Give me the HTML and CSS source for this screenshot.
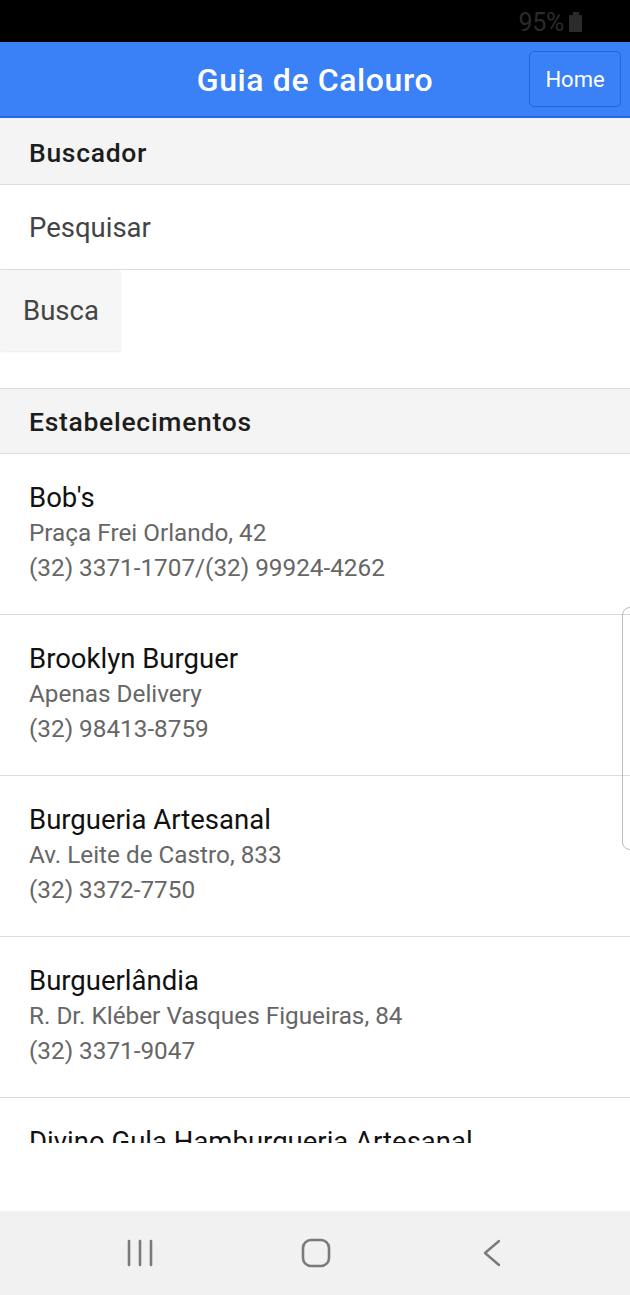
FILE: index.html
```html
<!DOCTYPE html>
<html lang="pt">
<head>
<meta charset="utf-8">
<title>Guia de Calouro</title>
<link rel="stylesheet" href="styles.css">
</head>
<body>
<div class="screen">
  <div class="statusbar">
    <span class="battery-text">95%</span>
    <span class="battery"><span class="battery-nub"></span><span class="battery-body"></span></span>
  </div>
  <header class="toolbar">
    <div class="toolbar-title">Guia de Calouro</div>
    <button class="home-btn">Home</button>
  </header>
  <main class="content">
    <div class="scroll">
      <div class="list-header">Buscador</div>
      <div class="input-row">Pesquisar</div>
      <div class="search-area">
        <button class="search-btn">Busca</button>
      </div>
      <div class="list-header second">Estabelecimentos</div>
      <div class="item">
        <div class="item-name">Bob's</div>
        <div class="item-line">Praça Frei Orlando, 42</div>
        <div class="item-line">(32) 3371-1707/(32) 99924-4262</div>
      </div>
      <div class="item">
        <div class="item-name">Brooklyn Burguer</div>
        <div class="item-line">Apenas Delivery</div>
        <div class="item-line">(32) 98413-8759</div>
      </div>
      <div class="item">
        <div class="item-name">Burgueria Artesanal</div>
        <div class="item-line">Av. Leite de Castro, 833</div>
        <div class="item-line">(32) 3372-7750</div>
      </div>
      <div class="item">
        <div class="item-name">Burguerlândia</div>
        <div class="item-line">R. Dr. Kléber Vasques Figueiras, 84</div>
        <div class="item-line">(32) 3371-9047</div>
      </div>
      <div class="item">
        <div class="item-name">Divino Gula Hamburgueria Artesanal</div>
      </div>
    </div>
    <div class="scroll-indicator"></div>
  </main>
  <nav class="navbar">
    <svg class="nav-icon" width="30" height="30" viewBox="0 0 30 30">
      <g stroke="#7a7a7a" stroke-width="2.6" stroke-linecap="round">
        <line x1="4" y1="3" x2="4" y2="27"/>
        <line x1="15" y1="3" x2="15" y2="27"/>
        <line x1="26" y1="3" x2="26" y2="27"/>
      </g>
    </svg>
    <svg class="nav-icon" width="30" height="30" viewBox="0 0 30 30">
      <rect x="2" y="2" width="26" height="26" rx="8" fill="none" stroke="#7a7a7a" stroke-width="2.6"/>
    </svg>
    <svg class="nav-icon" width="30" height="30" viewBox="0 0 30 30">
      <polyline points="22,3 8,15 22,27" fill="none" stroke="#7a7a7a" stroke-width="2.4" stroke-linecap="round" stroke-linejoin="round"/>
    </svg>
  </nav>
</div>
</body>
</html>
```

FILE: styles.css
```css
* { box-sizing: border-box; }
html, body { margin: 0; padding: 0; }
body {
  font-family: Roboto, "Noto Sans", sans-serif;
  background: #fff;
}
.screen {
  width: 630px;
  height: 1295px;
  display: flex;
  flex-direction: column;
  overflow: hidden;
}
.statusbar {
  height: 42px;
  background: #000;
  display: flex;
  align-items: center;
  justify-content: flex-end;
  padding-right: 48px;
  gap: 5px;
}
.battery-text {
  color: #2b2b2b;
  font-size: 25px;
  letter-spacing: -0.3px;
  margin-top: 2px;
}
.battery {
  display: flex;
  flex-direction: column;
  align-items: center;
  margin-top: 2px;
}
.battery-nub {
  width: 6px;
  height: 3px;
  background: #2b2b2b;
}
.battery-body {
  width: 13px;
  height: 17px;
  background: #2b2b2b;
  border-radius: 1px;
}
.toolbar {
  height: 76px;
  background: #3a80f6;
  border-bottom: 2px solid #1f68e6;
  display: flex;
  align-items: center;
  justify-content: center;
  position: relative;
}
.toolbar-title {
  color: #fff;
  font-size: 32px;
  font-weight: 500;
  letter-spacing: 0.6px;
  margin-top: 2px;
}
.home-btn {
  position: absolute;
  right: 9px;
  top: 9px;
  width: 92px;
  height: 56px;
  background: #3a80f6;
  border: 1.5px solid #1f66de;
  border-radius: 5px;
  color: #fff;
  font-family: Roboto, sans-serif;
  font-size: 22px;
  padding: 0;
}
.content {
  flex: 1;
  position: relative;
  background: #fff;
}
.scroll {
  height: 1025px;
  overflow: hidden;
}
.list-header {
  height: 67px;
  background: #f4f4f4;
  border-bottom: 1px solid #dcdcdc;
  padding-left: 29px;
  padding-top: 2px;
  display: flex;
  align-items: center;
  font-size: 26.5px;
  font-weight: 500;
  letter-spacing: 0.7px;
  color: #1d1d1d;
}
.list-header.second {
  height: 66px;
  border-top: 1px solid #dcdcdc;
  padding-top: 0;
}
.input-row {
  height: 85px;
  border-bottom: 1px solid #dcdcdc;
  padding-left: 29px;
  display: flex;
  align-items: center;
  font-size: 27.5px;
  color: #444;
}
.search-area {
  height: 118px;
}
.search-btn {
  width: 121px;
  height: 81px;
  background: #f6f6f6;
  border: none;
  border-radius: 3px;
  box-shadow: 0 1px 2px rgba(0,0,0,0.08);
  font-family: Roboto, sans-serif;
  font-size: 27.5px;
  color: #444;
  text-align: left;
  padding-left: 23px;
}
.item {
  height: 161px;
  border-bottom: 1px solid #dcdcdc;
  padding: 26px 29px 0;
}
.item-name {
  font-size: 27.5px;
  color: #111;
  line-height: 35px;
}
.item-line {
  font-size: 24.3px;
  color: #666;
  line-height: 35px;
}
.scroll-indicator {
  position: absolute;
  right: -8px;
  top: 489px;
  width: 16px;
  height: 243px;
  border: 1px solid #bbb;
  border-radius: 8px;
}
.navbar {
  height: 84px;
  background: #f1f1f1;
  display: flex;
  align-items: center;
  justify-content: flex-start;
  padding-left: 125px;
  gap: 146px;
}
.nav-icon { display: block; }
```
